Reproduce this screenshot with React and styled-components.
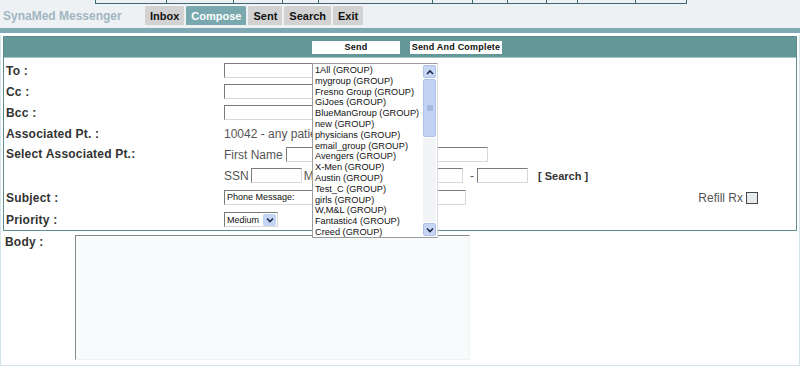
import React from "react";
import styled, { createGlobalStyle } from "styled-components";

const GlobalStyle = createGlobalStyle`
  html, body {
    margin: 0;
    padding: 0;
    background: #ffffff;
    font-family: "Liberation Sans", Arial, sans-serif;
  }
`;

const Page = styled.div`
  width: 800px;
  height: 366px;
  overflow: hidden;
  display: flex;
  flex-direction: column;
`;

const Top = styled.div`
  background: #edf1f4;
  height: 28px;
  display: flex;
  flex-direction: column;
`;

const CellStrip = styled.div`
  display: flex;
  margin-left: 95px;
  height: 4px;
`;

const StripCell = styled.div`
  width: ${(p) => p.w}px;
  height: 3px;
  border-left: 1px solid #3f6876;
  border-bottom: 1px solid #3f6876;
  &:last-child {
    border-right: 1px solid #3f6876;
  }
`;

const Masthead = styled.div`
  display: flex;
  align-items: flex-start;
  padding-top: 1px;
`;

const Title = styled.div`
  width: 142px;
  padding-left: 3px;
  padding-top: 4px;
  font-weight: bold;
  font-size: 12px;
  color: #a2b6c1;
`;

const Tabs = styled.div`
  display: flex;
  gap: 2px;
`;

const Tab = styled.div`
  height: 20px;
  line-height: 20px;
  padding: 0 5px;
  font-size: 11px;
  font-weight: bold;
  border-radius: 2px 2px 0 0;
  border-top: 1px solid #f6f6f6;
  box-sizing: border-box;
  background: ${(p) => (p.active ? "#79a8ae" : "#d2d2d2")};
  color: ${(p) => (p.active ? "#ffffff" : "#111111")};
`;

const Band = styled.div`
  height: 5px;
  background: #7faab4;
  border-bottom: 2px solid #ffffff;
`;

const Frame = styled.div`
  flex: 1;
  display: flex;
  flex-direction: column;
  border: 1px solid #d2e5ec;
  border-top: none;
  padding: 1px 2px 2px 2px;
`;

const FormBox = styled.div`
  position: relative;
  border: 1px solid #5d8d8e;
  display: flex;
  flex-direction: column;
`;

const ActionBar = styled.div`
  height: 20px;
  background: #649798;
  display: flex;
  align-items: center;
  gap: 10px;
  padding-left: 308px;
  border-bottom: 1px solid #a9c4c4;
`;

const ActionButton = styled.div`
  width: ${(p) => p.w}px;
  height: 13px;
  line-height: 13px;
  background: #ffffff;
  text-align: center;
  font-size: 9px;
  font-weight: bold;
  color: #111;
  letter-spacing: 0.2px;
`;

const Fields = styled.div`
  display: flex;
  flex-direction: column;
  padding-top: 2px;
`;

const Row = styled.div`
  display: flex;
  align-items: ${(p) => (p.top ? "flex-start" : "center")};
  min-height: ${(p) => p.h || 21}px;
`;

const Label = styled.div`
  width: 218px;
  flex-shrink: 0;
  padding-left: 2px;
  font-size: 12px;
  font-weight: bold;
  color: #333333;
  letter-spacing: 0.2px;
  line-height: ${(p) => (p.top ? "21px" : "normal")};
`;

const Controls = styled.div`
  display: flex;
  align-items: center;
  flex: 1;
  min-height: 21px;
`;

const Stack = styled.div`
  display: flex;
  flex-direction: column;
  flex: 1;
`;

const Plain = styled.span`
  font-size: 12px;
  color: #555555;
  margin: ${(p) => p.m || "0"};
  white-space: nowrap;
`;

const TextInput = styled.div`
  width: ${(p) => p.w}px;
  height: 15px;
  box-sizing: border-box;
  background: #ffffff;
  border: 1px solid;
  border-color: #7b7b7b #d8d8d8 #d8d8d8 #7b7b7b;
  margin-left: ${(p) => p.ml || 0}px;
  font-size: 9px;
  line-height: 13px;
  padding-left: 2px;
  color: #111;
`;

const SearchLink = styled.span`
  font-size: 11px;
  font-weight: bold;
  color: #333;
  margin-left: 10px;
`;

const Refill = styled.div`
  margin-left: auto;
  margin-right: 38px;
  display: flex;
  align-items: center;
  gap: 3px;
`;

const Check = styled.span`
  width: 12px;
  height: 12px;
  box-sizing: border-box;
  border: 1px solid #4a4a4a;
  background: #e6ecee;
`;

const FakeSelect = styled.div`
  width: 54px;
  height: 15px;
  box-sizing: border-box;
  border: 1px solid;
  border-color: #7b7b7b #d8d8d8 #d8d8d8 #7b7b7b;
  display: flex;
  align-items: center;
  justify-content: space-between;
  font-size: 9px;
  padding-left: 2px;
  color: #111;
  background: #fff;
`;

const ArrowBtn = styled.span`
  width: 13px;
  height: 12px;
  margin-right: 1px;
  background: #c3d4f5;
  border-radius: 2px;
  display: flex;
  align-items: center;
  justify-content: center;
`;

const GroupList = styled.div`
  position: absolute;
  left: 308px;
  top: 26px;
  width: 126px;
  height: 175px;
  box-sizing: border-box;
  background: #ffffff;
  border: 1px solid #9c9c9c;
  border-right-color: #dcdcdc;
  display: flex;
  z-index: 2;
`;

const Items = styled.div`
  flex: 1;
  overflow: hidden;
  padding: 1px 0 0 2px;
`;

const Item = styled.div`
  font-size: 9.2px;
  line-height: 10.8px;
  height: 10.8px;
  color: #111;
  white-space: nowrap;
`;

const Scroll = styled.div`
  width: 13px;
  display: flex;
  flex-direction: column;
  padding: 1px 1px 1px 0;
  gap: 1px;
`;

const ScrollBtn = styled.div`
  height: 13px;
  background: #c7d6f4;
  border: 1px solid #aebfe6;
  border-radius: 2px;
  box-sizing: border-box;
  display: flex;
  align-items: center;
  justify-content: center;
`;

const Thumb = styled.div`
  height: 58px;
  background: #c2d3f5;
  border: 1px solid #b0c2ea;
  border-radius: 2px;
  box-sizing: border-box;
  display: flex;
  align-items: center;
  justify-content: center;
`;

const Track = styled.div`
  flex: 1;
  background: #f3f4f8;
`;

const BodyRow = styled.div`
  flex: 1;
  display: flex;
  align-items: flex-start;
  padding-top: 4px;
`;

const BodyLabel = styled(Label)`
  width: 70px;
  padding-top: 0;
`;

const BodyArea = styled.div`
  width: 395px;
  height: 125px;
  box-sizing: border-box;
  background: #f8fbfc;
  border: 1px solid;
  border-color: #8a8a8a #eef2f3 #eef2f3 #8a8a8a;
`;

const cells = [70, 66, 48, 35, 113, 39, 34, 38, 30, 57, 50];
const tabs = ["Inbox", "Compose", "Sent", "Search", "Exit"];
const groups = [
  "1All",
  "mygroup",
  "Fresno Group",
  "GiJoes",
  "BlueManGroup",
  "new",
  "physicians",
  "email_group",
  "Avengers",
  "X-Men",
  "Austin",
  "Test_C",
  "girls",
  "W,M&L",
  "Fantastic4",
  "Creed",
];

const Chevron = ({ up }) => (
  <svg width="8" height="6" viewBox="0 0 8 6">
    <path
      d={up ? "M1 5 L4 2 L7 5" : "M1 1.5 L4 4.5 L7 1.5"}
      fill="none"
      stroke="#1d2a4a"
      strokeWidth="1.6"
    />
  </svg>
);

const Grip = () => (
  <svg width="6" height="6" viewBox="0 0 6 6">
    <path d="M0 1h6M0 3h6M0 5h6" stroke="#8aa0c8" strokeWidth="1" />
  </svg>
);

function App() {
  return (
    <Page>
      <GlobalStyle />
      <Top>
        <CellStrip>
          {cells.map((w, i) => (
            <StripCell key={i} w={w} />
          ))}
        </CellStrip>
        <Masthead>
          <Title>SynaMed Messenger</Title>
          <Tabs>
            {tabs.map((t) => (
              <Tab key={t} active={t === "Compose"}>
                {t}
              </Tab>
            ))}
          </Tabs>
        </Masthead>
      </Top>
      <Band />
      <Frame>
        <FormBox>
          <ActionBar>
            <ActionButton w={88}>Send</ActionButton>
            <ActionButton w={92}>Send And Complete</ActionButton>
          </ActionBar>

          <Fields>
            <Row>
              <Label>To :</Label>
              <Controls>
                <TextInput w={150} />
              </Controls>
            </Row>
            <Row>
              <Label>Cc :</Label>
              <Controls>
                <TextInput w={150} />
              </Controls>
            </Row>
            <Row>
              <Label>Bcc :</Label>
              <Controls>
                <TextInput w={150} />
              </Controls>
            </Row>
            <Row>
              <Label>Associated Pt. :</Label>
              <Controls>
                <Plain>10042 - any patient</Plain>
              </Controls>
            </Row>
            <Row top>
              <Label top>Select Associated Pt.:</Label>
              <Stack>
                <Controls>
                  <Plain>First Name</Plain>
                  <TextInput w={202} ml={3} />
                </Controls>
                <Controls>
                  <Plain>SSN</Plain>
                  <TextInput w={51} ml={2} />
                  <Plain m="0 0 0 2px">MRN</Plain>
                  <TextInput w={128} ml={4} />
                  <Plain m="0 3px 0 7px">-</Plain>
                  <TextInput w={51} />
                  <SearchLink>[ Search ]</SearchLink>
                </Controls>
              </Stack>
            </Row>
            <Row h={23}>
              <Label>Subject :</Label>
              <Controls>
                <TextInput w={242}>Phone Message:</TextInput>
                <Refill>
                  <Plain>Refill Rx</Plain>
                  <Check />
                </Refill>
              </Controls>
            </Row>
            <Row>
              <Label>Priority :</Label>
              <Controls>
                <FakeSelect>
                  Medium
                  <ArrowBtn>
                    <Chevron />
                  </ArrowBtn>
                </FakeSelect>
              </Controls>
            </Row>
          </Fields>

          <GroupList>
            <Items>
              {groups.map((g) => (
                <Item key={g}>{g} (GROUP)</Item>
              ))}
            </Items>
            <Scroll>
              <ScrollBtn>
                <Chevron up />
              </ScrollBtn>
              <Thumb>
                <Grip />
              </Thumb>
              <Track />
              <ScrollBtn>
                <Chevron />
              </ScrollBtn>
            </Scroll>
          </GroupList>
        </FormBox>

        <BodyRow>
          <BodyLabel>Body :</BodyLabel>
          <BodyArea />
        </BodyRow>
      </Frame>
    </Page>
  );
}

export default App;
